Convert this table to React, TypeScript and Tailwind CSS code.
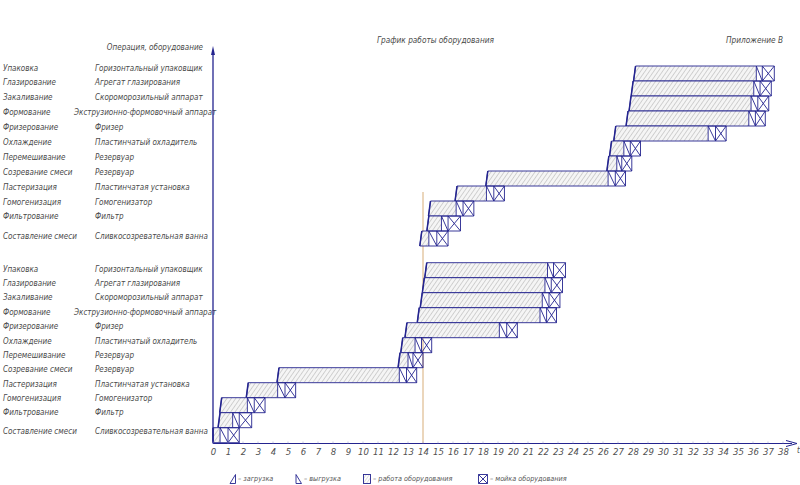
const NAVY = '#24248f';
const FONT = '"DejaVu Sans Condensed", "Liberation Sans", sans-serif';

const ROWS = [
  ['Упаковка', 'Горизонтальный упаковщик'],
  ['Глазирование', 'Агрегат глазирования'],
  ['Закаливание', 'Скороморозильный аппарат'],
  ['Формование', 'Экструзионно-формовочный аппарат'],
  ['Фризерование', 'Фризер'],
  ['Охлаждение', 'Пластинчатый охладитель'],
  ['Перемешивание', 'Резервуар'],
  ['Созревание смеси', 'Резервуар'],
  ['Пастеризация', 'Пластинчатая установка'],
  ['Гомогенизация', 'Гомогенизатор'],
  ['Фильтрование', 'Фильтр'],
  ['Составление смеси', 'Сливкосозревательная ванна'],
];

// start, end of work, end of unloading, end of washing (hours)
const BARS = [
  [14.25, 22.3, 22.7, 23.5],
  [14.09, 22.13, 22.55, 23.3],
  [13.95, 21.95, 22.4, 23.13],
  [13.75, 21.8, 22.24, 22.9],
  [12.93, 19.09, 19.58, 20.29],
  [12.65, 13.47, 13.9, 14.58],
  [12.47, 13.0, 13.33, 14.0],
  [4.4, 12.42, 12.9, 13.58],
  [2.35, 4.31, 4.8, 5.51],
  [0.58, 2.29, 2.75, 3.47],
  [0.47, 1.31, 1.75, 2.58],
  [0, 0.47, 1.0, 1.75],
];

const X = (t: number) => 213 + 15 * t;

function Bar({ b, top, shift }: { b: number[]; top: number; shift: number }) {
  const [xs, xw, xu, xe] = b.map((t) => X(t + shift));
  const y0 = top;
  const y1 = top + 15;
  const xl = Math.max(213, xs - 2);
  return (
    <g>
      <polygon
        points={`${xl},${y1} ${xs},${y0} ${xw},${y0} ${xw},${y1}`}
        fill="url(#hatch)"
        stroke={NAVY}
        strokeWidth={0.9}
      />
      <line x1={xl} y1={y1} x2={xs} y2={y0} stroke={NAVY} strokeWidth={1.5} />
      <path
        d={`M${xw} ${y0} H${xe} V${y1} H${xw} M${xw} ${y0} L${xu} ${y1} M${xu} ${y0} V${y1} M${xu} ${y0} L${xe} ${y1} M${xe} ${y0} L${xu} ${y1}`}
        fill="none"
        stroke={NAVY}
        strokeWidth={0.9}
      />
    </g>
  );
}

function Chart() {
  return (
    <svg width={590} height={417} viewBox="210 43 590 417" className="block shrink-0">
      <defs>
        <pattern id="hatch" width={3.6} height={3.6} patternUnits="userSpaceOnUse" patternTransform="rotate(35)">
          <rect width={3.6} height={3.6} fill="#f5f5f5" />
          <line x1={0} y1={0} x2={0} y2={3.6} stroke="#8c8c8c" strokeWidth={0.7} />
        </pattern>
      </defs>

      <line x1={423} y1={192} x2={423} y2={443} stroke="#d2a46a" strokeWidth={0.9} />

      {BARS.map((b, i) => (
        <Bar key={'t' + i} b={b} top={66 + 15 * i} shift={13.92} />
      ))}
      {BARS.map((b, i) => (
        <Bar key={'b' + i} b={b} top={262.7 + 15 * i} shift={0} />
      ))}

      {/* axes */}
      <line x1={213} y1={52} x2={213} y2={443.5} stroke={NAVY} strokeWidth={1.3} />
      <polygon points="213,46 211,55 215,55" fill={NAVY} />
      <line x1={213} y1={443.5} x2={792} y2={443.5} stroke={NAVY} strokeWidth={1.1} />
      <path d="M786 440.5 L797 443.5 L786 446.5" fill="none" stroke={NAVY} strokeWidth={1} />
      {Array.from({ length: 39 }, (_, t) => (
        <g key={t}>
          <line x1={X(t)} y1={441.5} x2={X(t)} y2={443.5} stroke="#9a9ad0" strokeWidth={0.6} />
          <text
            x={X(t) + 0.5}
            y={455}
            textAnchor="middle"
            fontSize={9.5}
            fontStyle="italic"
            fill="#505050"
            fontFamily={FONT}
          >
            {t}
          </text>
        </g>
      ))}
      <text x={797} y={453} fontSize={8} fontStyle="italic" fill="#505050" fontFamily={FONT}>
        t
      </text>
    </svg>
  );
}

function LabelRow({ op, eq, h }: { op: string; eq: string; h: string }) {
  return (
    <div className={`grid grid-cols-[92px_1fr] pl-[3px] whitespace-nowrap ${h}`}>
      <span>{op}</span>
      <span className={eq.startsWith('Экстр') ? 'ml-[-21px]' : ''}>{eq}</span>
    </div>
  );
}

function Labels() {
  const top = ROWS.slice(0, 11);
  const last = ROWS[11];
  return (
    <div className="w-[210px] shrink-0 flex flex-col text-[8px] italic text-[#4a4a4a]">
      <div className="h-[10px] leading-[10px] text-right pr-[7px] whitespace-nowrap">Операция, оборудование</div>
      <div className="h-[8.5px]" />
      {top.map(([op, eq]) => (
        <LabelRow key={'a' + op + eq} op={op} eq={eq} h="h-[14.9px] leading-[14.9px]" />
      ))}
      <div className="h-[4.8px]" />
      <LabelRow op={last[0]} eq={last[1]} h="h-[14.9px] leading-[14.9px]" />
      <div className="h-[17.6px]" />
      {top.map(([op, eq]) => (
        <LabelRow key={'b' + op + eq} op={op} eq={eq} h="h-[14.4px] leading-[14.4px]" />
      ))}
      <div className="h-[4.6px]" />
      <LabelRow op={last[0]} eq={last[1]} h="h-[14.4px] leading-[14.4px]" />
    </div>
  );
}

function LegendIcon({ kind }: { kind: 'load' | 'unload' | 'work' | 'wash' }) {
  if (kind === 'load')
    return (
      <svg width={8} height={10} viewBox="0 0 8 10" className="shrink-0">
        <path d="M1 9.5 L6.5 0.5 V9.5 Z" fill="none" stroke={NAVY} strokeWidth={0.9} />
      </svg>
    );
  if (kind === 'unload')
    return (
      <svg width={8} height={10} viewBox="0 0 8 10" className="shrink-0">
        <path d="M1 0.5 V9.5 H6.5 Z" fill="none" stroke={NAVY} strokeWidth={0.9} />
      </svg>
    );
  if (kind === 'work')
    return (
      <svg width={8} height={10} viewBox="0 0 8 10" className="shrink-0">
        <defs>
          <pattern id="lhatch" width={2.6} height={2.6} patternUnits="userSpaceOnUse" patternTransform="rotate(35)">
            <line x1={0} y1={0} x2={0} y2={2.6} stroke="#9a9a9a" strokeWidth={0.6} />
          </pattern>
        </defs>
        <rect x={0.5} y={0.5} width={7} height={9} fill="url(#lhatch)" stroke={NAVY} strokeWidth={0.9} />
      </svg>
    );
  return (
    <svg width={10} height={10} viewBox="0 0 10 10" className="shrink-0">
      <path d="M0.5 0.5 H9.5 V9.5 H0.5 Z M0.5 0.5 L9.5 9.5 M9.5 0.5 L0.5 9.5" fill="none" stroke={NAVY} strokeWidth={0.9} />
    </svg>
  );
}

function Legend() {
  return (
    <div className="h-[25px] pt-[13px] pl-[229px] flex items-center text-[7.2px] italic text-[#555] whitespace-nowrap">
      <div className="w-[66px] flex items-center gap-[1px]">
        <LegendIcon kind="load" />
        <span>– загрузка</span>
      </div>
      <div className="w-[68px] flex items-center gap-[1px]">
        <LegendIcon kind="unload" />
        <span>– выгрузка</span>
      </div>
      <div className="w-[115px] flex items-center gap-[2px]">
        <LegendIcon kind="work" />
        <span>– работа оборудования</span>
      </div>
      <div className="flex items-center gap-[2px]">
        <LegendIcon kind="wash" />
        <span>– мойка оборудования</span>
      </div>
    </div>
  );
}

export default function App() {
  return (
    <div className="w-[800px] h-[485px] overflow-hidden bg-white flex flex-col" style={{ fontFamily: FONT }}>
      <header className="h-[43px] shrink-0 flex items-start pt-[35px] text-[8.2px] leading-[10px] italic text-[#4a4a4a] whitespace-nowrap">
        <span className="ml-[377px]">График работы оборудования</span>
        <span className="ml-auto mr-[17px]">Приложение В</span>
      </header>
      <div className="flex h-[417px] shrink-0">
        <Labels />
        <Chart />
      </div>
      <Legend />
    </div>
  );
}
